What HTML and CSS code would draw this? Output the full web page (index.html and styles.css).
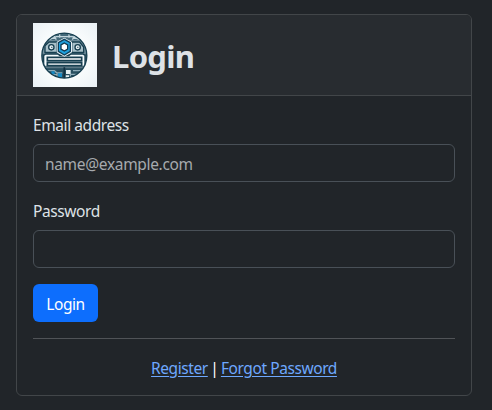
FILE: index.html
```html
<!DOCTYPE html>
<html lang="en">
<head>
<meta charset="utf-8">
<title>Login</title>
<link rel="stylesheet" href="styles.css">
</head>
<body>
<main class="card">
  <header class="card-header">
    <svg class="logo" viewBox="0 0 192 192" aria-hidden="true">
      <defs>
        <radialGradient id="paper" r="0.75"><stop offset="0.5" stop-color="#f8fbfc"/><stop offset="1" stop-color="#e9f0f4"/></radialGradient>
        <clipPath id="disc"><circle cx="94" cy="98" r="67"/></clipPath>
      </defs>
      <rect width="192" height="192" fill="url(#paper)"/>
      <g clip-path="url(#disc)">
        <rect x="24" y="28" width="140" height="140" fill="#7895a2"/>
        <path d="M24 28h140v24H24z" fill="#456a7a"/>
        <path d="M48 50l22-9h48l22 9M62 38l8 12M80 32v12M108 32v12M126 38l-8 12" fill="none" stroke="#c4d6dd" stroke-width="4"/>
        <path d="M48 57h24v31H36V68zM116 57h24l12 15v16h-36z" fill="#a9c0c9" stroke="#173f50" stroke-width="4"/>
        <path d="M24 92h140v46H24z" fill="#41606e"/>
        <path d="M32 135V97l6-4h36l7 5h26l7-5h36l6 4v38" fill="#f4fafc" stroke="#173f50" stroke-width="4"/>
        <path d="M24 128h140v9H24z" fill="#5d7885"/>
        <path d="M24 136h140v34H24z" fill="#294f60"/>
        <path d="M38 143h26l8 7h16M152 143h-32M54 155h18v12M134 154h-22v14" fill="none" stroke="#8eacb9" stroke-width="4"/>
        <path d="M75 151h12v16H75zM55 145h10v8H55z" fill="#168bc7"/>
        <path d="M99 141h14v12H99zM98 157h10v10H98z" fill="#e6f0f3"/>
        <path d="M94 133v35" stroke="#102f40" stroke-width="5"/>
      </g>
      <path d="M43 103h103v10H43zM43 119h103v9H43z" fill="#fff" stroke="#173f50" stroke-width="5"/>
      <g fill="#e9f1f4" stroke="#173f50" stroke-width="4">
        <circle cx="55" cy="73" r="8"/><circle cx="134" cy="73" r="8"/>
      </g>
      <path d="M55 73h3M133 73h3" stroke="#173f50" stroke-width="4"/>
      <path d="M94 44l23 13v31l-23 13-23-13V57z" fill="#e9f3f7"/>
      <path d="M94 49l18 10v26l-18 11-18-11V59z" fill="#20a0dd" stroke="#103f59" stroke-width="4"/>
      <path d="M94 60l10 6v12l-10 6-10-6V66z" fill="#fff" stroke="#123a50" stroke-width="4"/>
      <circle cx="94" cy="98" r="67.5" fill="none" stroke="#173f50" stroke-width="4"/>
    </svg>
    <h1 class="title">Login</h1>
  </header>
  <form class="card-body">
    <label class="label" for="email">Email address</label>
    <input class="input" id="email" type="email" placeholder="name@example.com">
    <label class="label" for="password">Password</label>
    <input class="input" id="password" type="password">
    <button class="button" type="button">Login</button>
    <hr class="rule">
    <nav class="links"><a class="link register" href="#">Register</a><span class="separator">|</span><a class="link forgot" href="#">Forgot Password</a></nav>
  </form>
</main>
</body>
</html>
```
FILE: styles.css
```css
* { box-sizing: border-box; }
body {
  margin: 0;
  padding: 14px 20px 14px 16px;
  background: #212529;
  color: #dee2e6;
  font: 15.5px/24px "Noto Sans", "Open Sans", sans-serif;
  letter-spacing: -0.42px;
}
.card { border: 1px solid #424649; border-radius: 6px; overflow: hidden; }
.card-header {
  display: flex;
  align-items: center;
  gap: 15px;
  padding: 8px 16px;
  background: #282c30;
  border-bottom: 1px solid #424649;
}
.logo { display: block; width: 64px; height: 64px; }
.title { margin: 0; padding-top: 2px; font-size: 31px; line-height: 38px; font-weight: 700; letter-spacing: -0.7px; }
.card-body { display: flex; flex-direction: column; padding: 16px; }
.label { margin-bottom: 8px; height: 24px; line-height: 26px; }
.input {
  height: 38px;
  margin: 0 0 16px;
  padding: 8px 11px 6px;
  border: 1px solid #495057;
  border-radius: 6px;
  background: #212529;
  color: #dee2e6;
  font: inherit;
  letter-spacing: -0.33px;
}
.input::placeholder { color: #a6aaae; opacity: 1; }
.button {
  width: 65px;
  height: 38px;
  padding: 2px 0 0;
  border: 0;
  border-radius: 6px;
  background: #0d6efd;
  color: #fff;
  font: inherit;
  letter-spacing: inherit;
}
.rule { width: 100%; height: 1px; margin: 16px 0; border: 0; background: #505357; }
.links { display: flex; justify-content: center; gap: 2.5px; height: 24px; line-height: 26px; }
.separator { color: #fff; }
.link { color: #6ea8fe; text-decoration: underline; text-underline-offset: 2px; }
```
